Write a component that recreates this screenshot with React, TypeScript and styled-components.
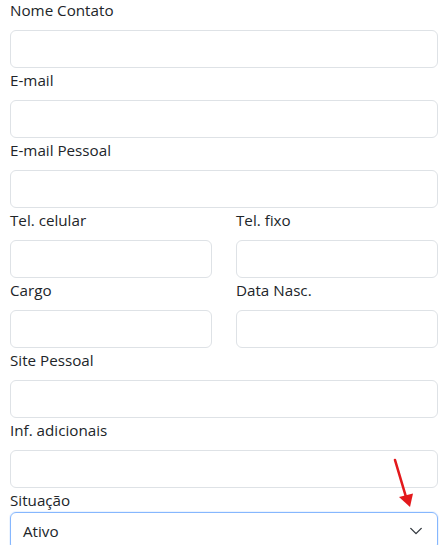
import React from "react";
import styled, { createGlobalStyle } from "styled-components";

const GlobalStyle = createGlobalStyle`
  body {
    margin: 0;
    background: #ffffff;
    font-family: "Open Sans", "Noto Sans", sans-serif;
    color: #212529;
  }
`;

interface FieldProps {
  label: string;
}

const Field: React.FunctionComponent<FieldProps> = ({ label }) => (
  <Group>
    <Label>{label}</Label>
    <Input type="text" />
  </Group>
);

const App = () => {
  return (
    <>
      <GlobalStyle />
      <Form>
        <Field label="Nome Contato" />
        <Field label="E-mail" />
        <Field label="E-mail Pessoal" />
        <Row>
          <Field label="Tel. celular" />
          <Field label="Tel. fixo" />
        </Row>
        <Row>
          <Field label="Cargo" />
          <Field label="Data Nasc." />
        </Row>
        <Field label="Site Pessoal" />
        <Field label="Inf. adicionais" />
        <Group>
          <Label $tight>Situação</Label>
          <SelectBox>
            <span>Ativo</span>
            <svg width="14" height="14" viewBox="0 0 16 16">
              <path
                d="M2 5l6 6 6-6"
                fill="none"
                stroke="#343a40"
                strokeWidth="1.6"
                strokeLinecap="round"
                strokeLinejoin="round"
              />
            </svg>
          </SelectBox>
          <Arrow width="26" height="56" viewBox="0 0 26 56">
            <line x1="5" y1="5" x2="16" y2="42" stroke="#e3191c" strokeWidth="2.6" strokeLinecap="round" />
            <path d="M9 42 L23 38.5 L20 52 Z" fill="#e3191c" />
          </Arrow>
        </Group>
      </Form>
    </>
  );
};

const Form = styled.div`
  padding: 0 5px 0 10px;
  display: flex;
  flex-direction: column;
  gap: 2px;
`;

const Row = styled.div`
  display: grid;
  grid-template-columns: 1fr 1fr;
  column-gap: 24px;
`;

const Group = styled.div`
  position: relative;
  display: flex;
  flex-direction: column;
`;

const Label = styled.label<{ $tight?: boolean }>`
  font-size: 15.2px;
  line-height: 20px;
  margin-bottom: ${(p) => (p.$tight ? "2px" : "10px")};
  color: #212529;
`;

const Input = styled.input`
  box-sizing: border-box;
  width: 100%;
  height: 38px;
  border: 1px solid #dee2e6;
  border-radius: 6px;
  background: #fff;
  outline: none;
  padding: 0 12px;
`;

const SelectBox = styled.div`
  box-sizing: border-box;
  height: 38px;
  border: 1px solid #86b7fe;
  border-radius: 6px;
  box-shadow: 0 0 0 1px rgba(13, 110, 253, 0.08);
  display: flex;
  align-items: center;
  justify-content: space-between;
  padding: 0 14px 0 12px;
  font-size: 15.2px;
  color: #212529;
`;

const Arrow = styled.svg`
  position: absolute;
  left: 380px;
  top: -35px;
`;

export default App;
